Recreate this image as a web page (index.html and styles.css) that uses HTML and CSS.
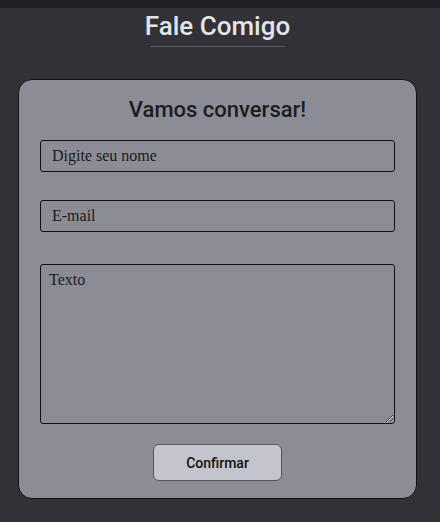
FILE: index.html
```html
<!DOCTYPE html>
<html lang="pt-BR">
<head>
<meta charset="utf-8">
<title>Fale Comigo</title>
<link rel="stylesheet" href="styles.css">
</head>
<body>
<div class="topbar"></div>
<main class="page">
  <header class="head">
    <h1 class="title">Fale Comigo</h1>
    <div class="rule"></div>
  </header>
  <form class="card">
    <h2 class="card-title">Vamos conversar!</h2>
    <input class="field" type="text" placeholder="Digite seu nome">
    <input class="field" type="email" placeholder="E-mail">
    <textarea class="area" placeholder="Texto"></textarea>
    <button class="btn" type="button">Confirmar</button>
  </form>
</main>
</body>
</html>
```
FILE: styles.css
```css
html, body {
  margin: 0;
  padding: 0;
  background: #323137;
  height: 100%;
}
body {
  font-family: Roboto, "Liberation Sans", sans-serif;
}
.topbar {
  height: 8px;
  background: #212025;
}
.page {
  width: 399px;
  margin-left: 18px;
  display: flex;
  flex-direction: column;
}
.head {
  display: flex;
  flex-direction: column;
  align-items: center;
  padding-top: 2px;
}
.title {
  margin: 0;
  font-size: 26px;
  font-weight: 500;
  line-height: 32px;
  color: #e4e4e8;
}
.rule {
  width: 135px;
  height: 1px;
  margin-top: 4px;
  background: #5c5b61;
}
.card {
  margin-top: 32px;
  box-sizing: border-box;
  width: 399px;
  height: 420px;
  background: #8c8c96;
  border: 1px solid #101014;
  border-radius: 14px;
  padding: 15px 21px 0 21px;
  display: flex;
  flex-direction: column;
}
.card-title {
  margin: 0;
  text-align: center;
  font-size: 22px;
  font-weight: 500;
  color: #1c1c20;
  line-height: 30px;
}
.field {
  box-sizing: border-box;
  height: 32px;
  width: 100%;
  margin: 15px 0 14px;
  background: transparent;
  border: 1px solid #111;
  border-radius: 3px;
  padding: 0 11px;
  font-family: "Liberation Serif", serif;
  font-size: 16px;
  color: #1a1a1a;
}
.field + .field {
  margin-top: 14px;
  margin-bottom: 32px;
}
.field::placeholder, .area::placeholder {
  color: #1a1a1a;
  opacity: 1;
}
.area {
  box-sizing: border-box;
  width: 100%;
  height: 160px;
  background: transparent;
  border: 1px solid #111;
  border-radius: 3px;
  padding: 6px 8px;
  font-family: "Liberation Serif", serif;
  font-size: 16px;
  color: #1a1a1a;
  resize: vertical;
}
.btn {
  align-self: center;
  margin-top: 20px;
  width: 129px;
  height: 37px;
  background: #c4c4cc;
  border: 1px solid #55555c;
  border-radius: 6px;
  font-family: Roboto, "Liberation Sans", sans-serif;
  font-size: 14px;
  font-weight: 500;
  color: #111;
}
```
